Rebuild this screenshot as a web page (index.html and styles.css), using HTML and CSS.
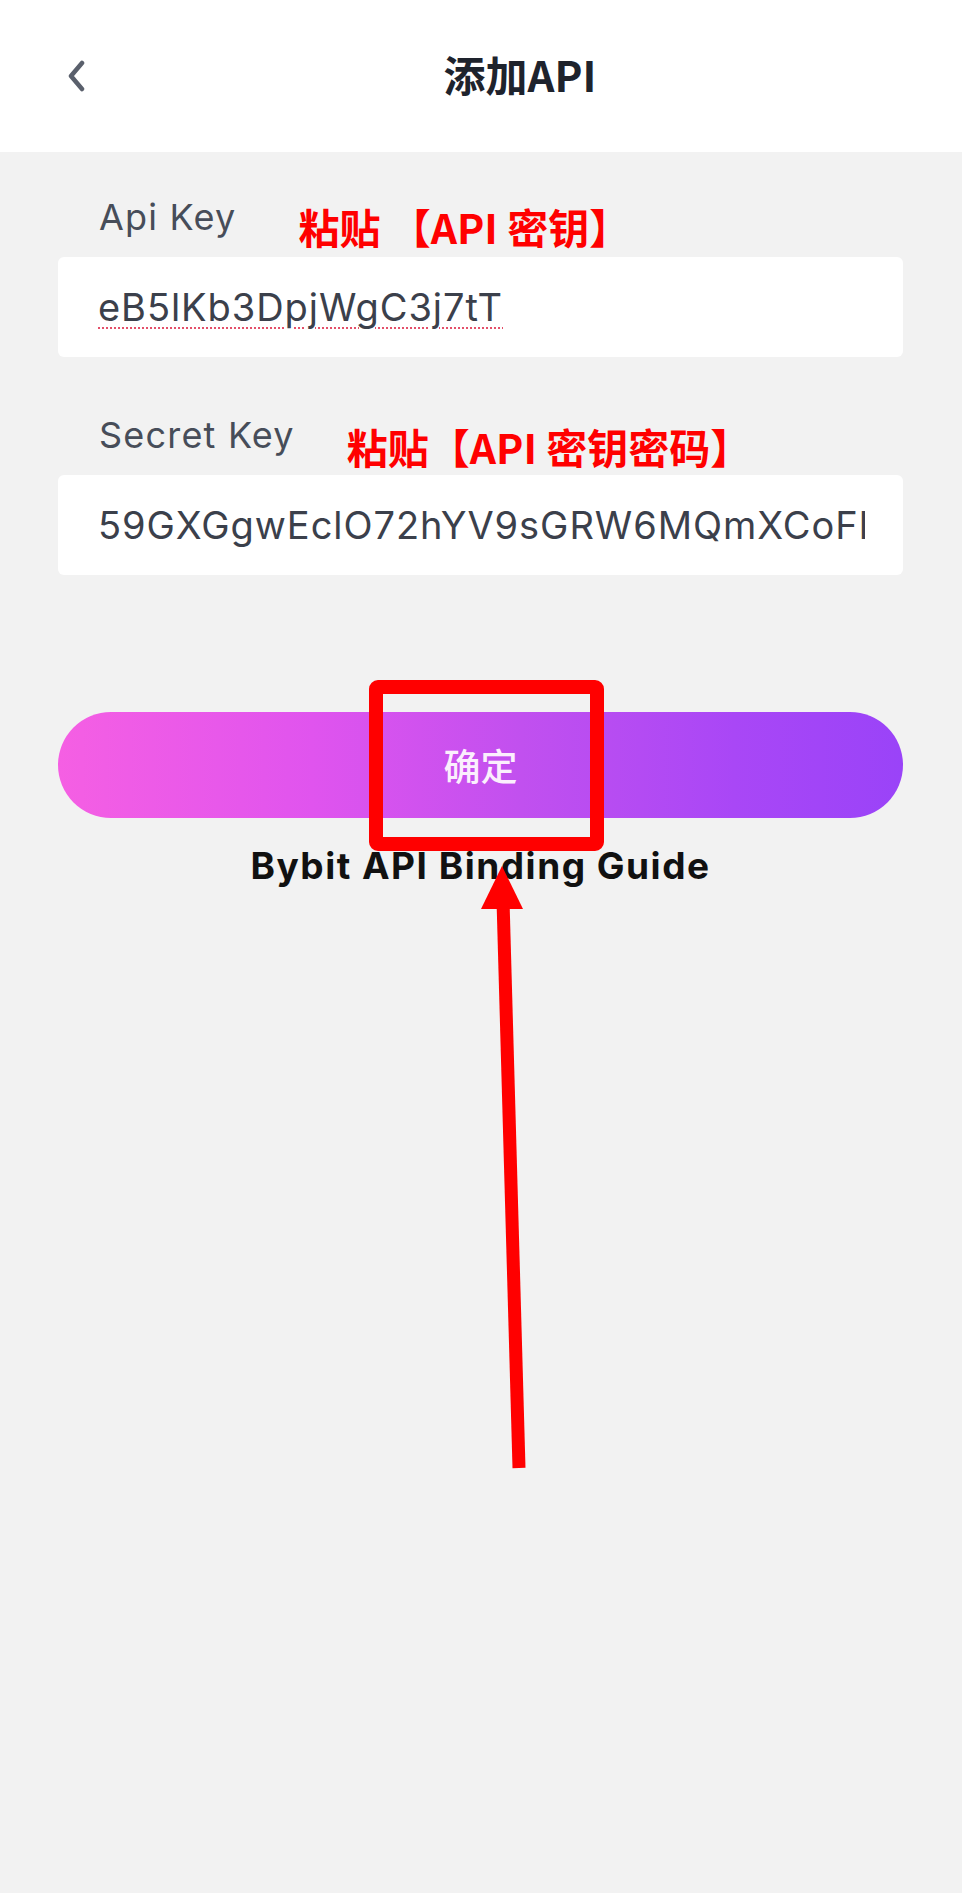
FILE: index.html
```html
<!DOCTYPE html>
<html lang="zh-CN">
<head>
<meta charset="utf-8">
<title>添加API</title>
<link rel="stylesheet" href="styles.css">
</head>
<body>
<div class="page">
  <header class="topbar">
    <button class="back" aria-label="返回">
      <svg width="20" height="32" viewBox="0 0 20 32"><path d="M15 3 L4 16 L15 29" fill="none" stroke="#5a606c" stroke-width="4.5" stroke-linecap="round" stroke-linejoin="round"/></svg>
    </button>
    <h1 class="title">添加API</h1>
  </header>
  <main class="form">
    <div class="field">
      <div class="label-row">
        <span class="label">Api Key</span>
        <span class="note note-1">粘贴 【API 密钥】</span>
      </div>
      <div class="input"><span class="value spell">eB5lKb3DpjWgC3j7tT</span></div>
    </div>
    <div class="field field-2">
      <div class="label-row">
        <span class="label">Secret Key</span>
        <span class="note note-2">粘贴【API 密钥密码】</span>
      </div>
      <div class="input"><span class="value">59GXGgwEclO72hYV9sGRW6MQmXCoFI</span></div>
    </div>
    <button class="submit">确定</button>
    <a class="guide">Bybit API Binding Guide</a>
  </main>
  <div class="highlight"></div>
  <svg class="arrow" width="962" height="1893" viewBox="0 0 962 1893">
    <line x1="519" y1="1468" x2="503" y2="900" stroke="#ff0000" stroke-width="13"/>
    <polygon points="502,866 481,909 523,909" fill="#ff0000"/>
  </svg>
</div>
</body>
</html>
```

FILE: styles.css
```css
* { box-sizing: border-box; }
html, body { margin: 0; padding: 0; }
body {
  background: #f2f2f2;
  font-family: "Inter", "Noto Sans CJK SC", sans-serif;
}
.page {
  position: relative;
  width: 962px;
  min-height: 1893px;
  background: #f2f2f2;
}
.topbar {
  height: 152px;
  background: #ffffff;
  display: flex;
  align-items: center;
  padding: 0 9px 0 67px;
}
.back {
  border: 0;
  background: none;
  padding: 0;
  width: 20px;
  height: 32px;
  display: flex;
}
.title {
  flex: 1;
  margin: 0;
  text-align: center;
  font-family: "Noto Sans CJK SC", sans-serif;
  font-weight: 700;
  font-size: 42px;
  line-height: 50px;
  color: #1e232d;
  transform: translateY(-2px);
}
.form {
  display: flex;
  flex-direction: column;
  padding: 45px 59px 0 58px;
}
.field { display: flex; flex-direction: column; gap: 20px; }
.field-2 { margin-top: 58px; }
.label-row {
  height: 40px;
  display: flex;
  align-items: flex-start;
}
.label {
  font-size: 36px;
  line-height: 40px;
  letter-spacing: 1.2px;
  color: #474d59;
  padding-left: 41px;
}
.note {
  font-family: "Noto Sans CJK SC", sans-serif;
  font-weight: 700;
  font-size: 41px;
  line-height: 40px;
  color: #ff0000;
  white-space: nowrap;
}
.note-1 { margin-left: 62px; margin-top: 9px; }
.note-2 { margin-left: 52px; margin-top: 11px; }
.input {
  height: 100px;
  background: #ffffff;
  border-radius: 6px;
  display: flex;
  align-items: center;
  padding: 0 38px 0 40px;
  overflow: hidden;
  white-space: nowrap;
}
.value {
  font-size: 38px;
  letter-spacing: 0.95px;
  color: #3b404b;
  overflow: hidden;
}
.spell {
  text-decoration: underline dotted #e4506a;
  text-decoration-thickness: 2px;
  text-underline-offset: 6px;
}
.submit {
  margin-top: 137px;
  height: 106px;
  border: 0;
  border-radius: 53px;
  background: linear-gradient(90deg, #f55fe3 0%, #e054ee 30%, #c150ef 55%, #a947f6 80%, #9a43f8 100%);
  color: #fbeffd;
  font-family: "Noto Sans CJK SC", sans-serif;
  font-weight: 500;
  font-size: 37px;
  padding: 0;
}
.guide {
  margin-top: 25px;
  text-align: center;
  font-family: "Inter", sans-serif;
  font-weight: 700;
  font-size: 37px;
  line-height: 46px;
  letter-spacing: 1.5px;
  color: #111111;
}
.highlight {
  position: absolute;
  left: 369px;
  top: 680px;
  width: 235px;
  height: 171px;
  border: 14px solid #ff0000;
  border-radius: 9px;
}
.arrow {
  position: absolute;
  left: 0;
  top: 0;
  pointer-events: none;
}
```
